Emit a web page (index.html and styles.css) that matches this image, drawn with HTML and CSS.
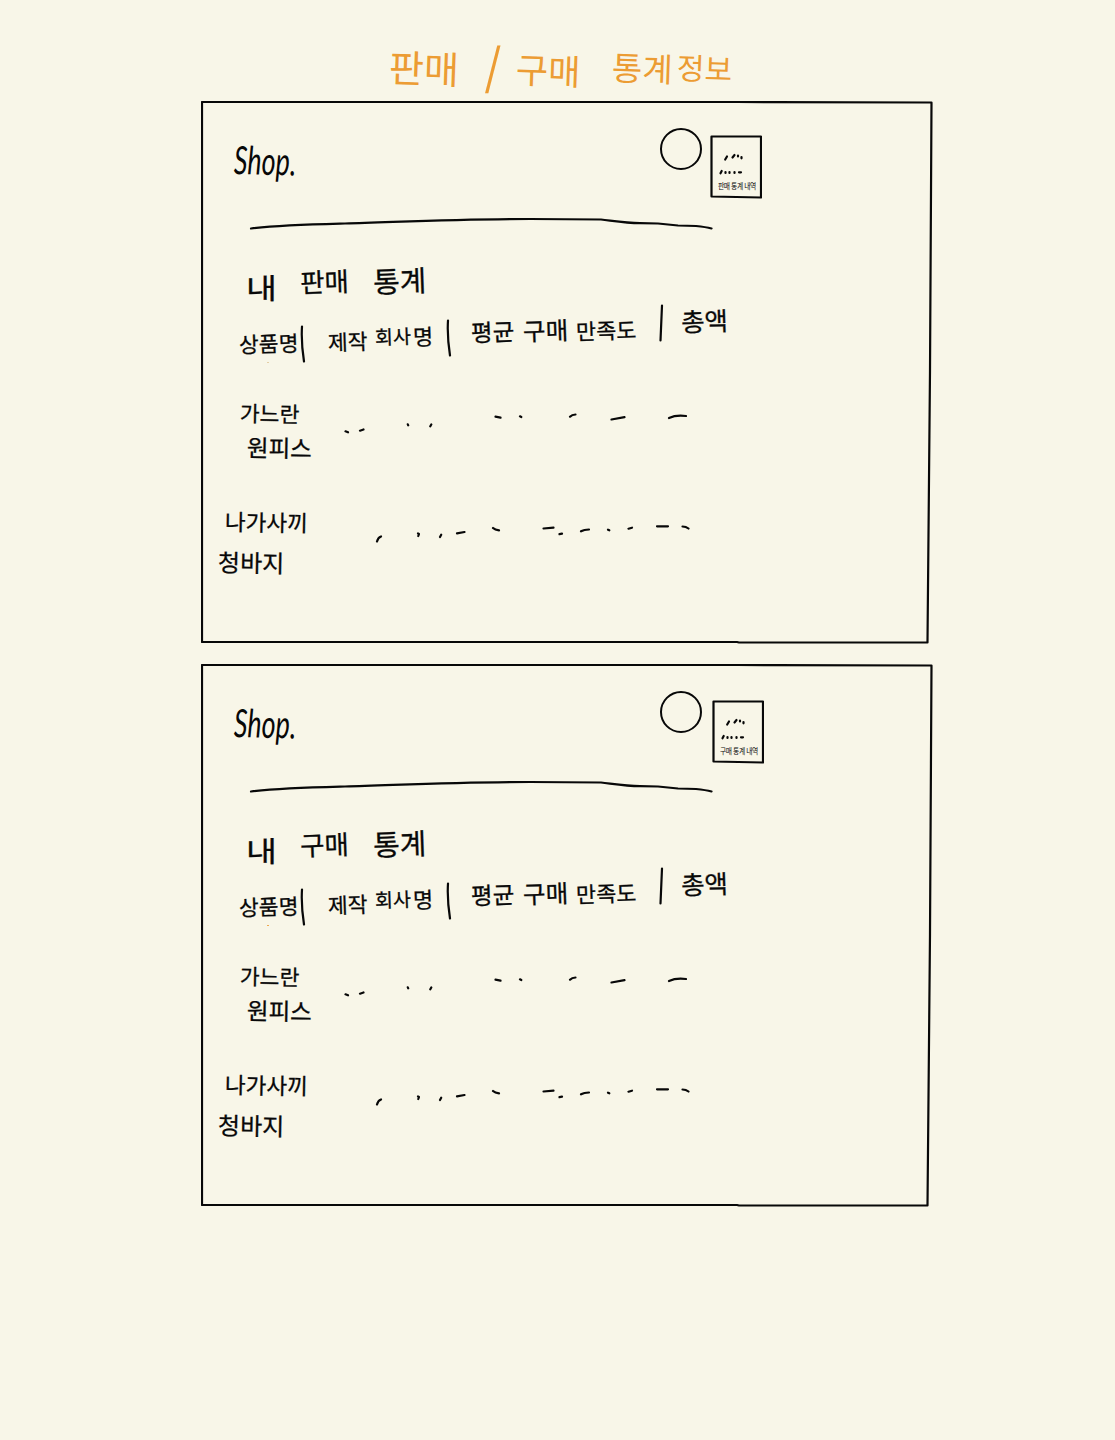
FILE: index.html
```html
<!DOCTYPE html>
<html lang="ko">
<head>
<meta charset="utf-8">
<title>판매 / 구매 통계정보</title>
<link rel="stylesheet" href="styles.css">
</head>
<body>
<svg class="defs" width="0" height="0" aria-hidden="true">
  <symbol id="frame" viewBox="0 0 732 544"><path d="M1 1 L536 1 L730.5 1.5 L729 270 L726.500 541.500 L538 541.500 L536 541 L1 541 Z"/></symbol>
  <symbol id="rule" viewBox="249 215 465 16"><path d="M251 228.500 C280 225 305 224.500 345 223.500 C400 222 455 219 530 219 L601 219.500 C614 221 626 223 640 223.200 L658 223.500 L678 225.500 L696 226 Q706 227 711.500 228.500"/></symbol>
  <symbol id="card" viewBox="0 0 52 64"><path d="M1.500 1.500 H51 V62.500 L1.500 61.500 Z"/><path class="dots" d="M17 21.500 L15.200 24.500 M24.500 20 L22.500 22.500 M28 20.500 V21.500 M31.500 22 V23.300 M11.700 36 L10.500 38.300 M15.500 37 V38 M19.500 37 V38 M24.500 37 V38 M29 37.300 H31"/></symbol>
  <symbol id="marks-a" viewBox="340 390 360 90"><path d="M345.500 431.300 L348 432.300 M360 430.700 L363.500 429.500 M407.800 424.300 L408.200 425.300 M431.300 424.500 L430.300 426.300 M495.500 416.700 L500.500 417.700 M520 416.300 L521.300 417 M570 416.700 Q572 414.500 575.500 414.500 M611.500 419.500 L624.500 417.200 M669 418 Q676 414.700 686 416"/></symbol>
  <symbol id="marks-b" viewBox="340 480 360 90"><path d="M377 541.500 Q378 537.500 381 536.500 M418 533.500 L419 534 L418.300 536 M441.200 534.700 L440 537 M457 533.300 L464.500 532 M493 528 Q495 530 499 530.300 M543.500 528.500 L553.500 527.700 M559.500 534.200 L562 533.700 M581 531.300 Q584 529.700 589 529.500 M608 529.700 L609.300 530.300 M628.500 528.700 L632 527.700 M657 526.300 H668 M682.500 526.500 Q686 526.500 688.500 528.500"/></symbol>
  <symbol id="bar" viewBox="0 0 6 38"><path d="M2 1.500 Q1 17 4 36.500"/></symbol>
  <symbol id="bar-l" viewBox="0 0 6 38"><path d="M4 1.500 L2.500 36.500"/></symbol>
</svg>

<h1 class="title"><span class="t-sell">판매</span><span class="t-slash">/</span><span class="t-buy">구매</span><span class="t-stat">통계</span><span class="t-info">정보</span></h1>

<main class="boards">
  <section class="panel">
    <svg class="frame"><use href="#frame"/></svg>
    <header class="top">
      <div class="logo">Shop.</div>
      <span class="avatar"></span>
      <div class="menu"><svg><use href="#card"/></svg><p>판매 통계 내역</p></div>
    </header>
    <svg class="rule"><use href="#rule"/></svg>
    <h2 class="heading"><span class="h-my">내</span><span class="h-kind">판매</span><span class="h-stat">통계</span></h2>
    <div class="columns">
      <span class="c-name">상품명</span><svg class="bar one"><use href="#bar"/></svg>
      <span class="c-make">제작</span><span class="c-firm">회사</span><span class="c-label">명</span><svg class="bar two"><use href="#bar"/></svg>
      <span class="c-avg">평균</span><span class="c-buy">구매</span><span class="c-sat">만족도</span><svg class="bar three"><use href="#bar-l"/></svg>
      <span class="c-total">총액</span>
      <i class="speck"></i>
    </div>
    <div class="item first"><div class="name"><span>가느란</span><span>원피스</span></div><svg class="marks"><use href="#marks-a"/></svg></div>
    <div class="item second"><div class="name"><span>나가사끼</span><span>청바지</span></div><svg class="marks"><use href="#marks-b"/></svg></div>
  </section>

  <section class="panel purchase">
    <svg class="frame"><use href="#frame"/></svg>
    <header class="top">
      <div class="logo">Shop.</div>
      <span class="avatar"></span>
      <div class="menu"><svg><use href="#card"/></svg><p>구매 통계 내역</p></div>
    </header>
    <svg class="rule"><use href="#rule"/></svg>
    <h2 class="heading"><span class="h-my">내</span><span class="h-kind">구매</span><span class="h-stat">통계</span></h2>
    <div class="columns">
      <span class="c-name">상품명</span><svg class="bar one"><use href="#bar"/></svg>
      <span class="c-make">제작</span><span class="c-firm">회사</span><span class="c-label">명</span><svg class="bar two"><use href="#bar"/></svg>
      <span class="c-avg">평균</span><span class="c-buy">구매</span><span class="c-sat">만족도</span><svg class="bar three"><use href="#bar-l"/></svg>
      <span class="c-total">총액</span>
      <i class="speck"></i>
    </div>
    <div class="item first"><div class="name"><span>가느란</span><span>원피스</span></div><svg class="marks"><use href="#marks-a"/></svg></div>
    <div class="item second"><div class="name"><span>나가사끼</span><span>청바지</span></div><svg class="marks"><use href="#marks-b"/></svg></div>
  </section>
</main>
</body>
</html>
```
FILE: styles.css
```css
* { box-sizing: border-box; }
body {
  margin: 0;
  min-height: 1440px;
  background: #f8f6e8;
  color: #080808;
  font-family: "Noto Sans CJK KR", sans-serif;
  line-height: 1;
}
svg {
  display: block;
  flex: none;
  fill: none;
  stroke: #080808;
  stroke-width: 2.2;
  stroke-linecap: round;
  stroke-linejoin: round;
}
.defs { position: absolute; }
h1, h2, p { margin: 0; font-weight: 400; }
span { white-space: nowrap; flex: none; }

.title {
  display: flex;
  align-items: flex-start;
  height: 101px;
  padding-left: 389px;
  color: #ec9c33;
}
.title span { transform: rotate(2deg); }
.title .t-sell { width: 71px; margin-top: 48px; font-size: 38px; }
.title .t-slash { width: 20px; margin: 42px 0 0 23px; font-size: 49px; transform: skewX(3deg); }
.title .t-buy { width: 66px; margin: 51px 0 0 13px; font-size: 35px; }
.title .t-stat { width: 60px; margin: 51px 0 0 30px; font-size: 33px; }
.title .t-info { width: 56px; margin: 52px 0 0 5px; font-size: 30px; }

.boards { display: flex; flex-direction: column; gap: 21px; padding-left: 201px; }
.panel { position: relative; width: 732px; height: 542px; }
.frame { position: absolute; inset: 0; width: 732px; height: 544px; }

.top { display: flex; align-items: flex-start; height: 114px; }
.logo {
  width: 62px;
  margin: 39px 0 0 33px;
  font: italic 400 39px/1 Lato, sans-serif;
  transform: scaleX(.69) rotate(1deg);
  transform-origin: left center;
}
.avatar {
  width: 42px;
  height: 42px;
  margin: 27px 0 0 364px;
  border: 2px solid #080808;
  border-radius: 50%;
}
.menu { position: relative; width: 52px; height: 64px; margin: 34px 0 0 8px; }
.menu svg { width: 52px; height: 64px; }
.menu .dots { stroke-width: 2.1; }
.menu p {
  position: absolute;
  left: 8px;
  top: 47px;
  font-size: 7.5px;
  letter-spacing: -.45px;
  white-space: nowrap;
  transform: scaleX(.9);
  transform-origin: left;
}
.purchase .menu { margin: 36px 0 0 10px; }
.rule { width: 465px; height: 16px; margin-left: 48px; }

.heading { display: flex; align-items: flex-start; height: 69px; }
.heading span, .columns span, .name span { transform: rotate(-2deg); -webkit-text-stroke: .3px #080808; }
.heading .h-my { width: 32px; margin: 42px 0 0 45px; font-size: 28px; transform: scaleX(1.2); transform-origin: left; }
.h-kind { width: 49px; margin: 37px 0 0 22px; font-size: 26.5px; }
.h-stat { width: 54px; margin: 34px 0 0 24px; font-size: 29px; }

.columns { position: relative; display: flex; align-items: flex-start; height: 90px; }
.c-name { width: 60px; margin: 32px 0 0 38px; font-size: 21.5px; }
.c-make { width: 41px; margin: 30px 0 0 22px; font-size: 21.5px; }
.c-firm { width: 37px; margin: 26px 0 0 6px; font-size: 19.5px; }
.c-label { width: 23px; margin: 24px 0 0 1px; font-size: 22px; }
.c-avg { width: 44px; margin: 20px 0 0 19px; font-size: 23.5px; }
.c-buy { width: 47px; margin: 18px 0 0 8px; font-size: 24.5px; }
.c-sat { width: 61px; margin: 19px 0 0 6px; font-size: 21.8px; }
.c-total { width: 47px; margin: 7px 0 0 17px; font-size: 25.5px; }
.bar { width: 6px; height: 38px; }
.bar.one { margin: 25px 0 0 1px; }
.bar.two { margin: 19px 0 0 10px; }
.bar.three { margin: 4px 0 0 21px; }
.speck {
  position: absolute;
  left: 66px;
  top: 62px;
  width: 2px;
  height: 1px;
  background: #e4cfa6;
}
.purchase .speck { background: #eea94f; }

.item { display: flex; height: 90px; }
.name { display: flex; flex-direction: column; align-items: flex-start; width: 139px; }
.marks { width: 360px; height: 90px; }
.first .name span:first-child { margin: 12px 0 0 39px; font-size: 21.5px; }
.first .name span:last-child { margin: 12px 0 0 46px; font-size: 23.5px; }
.second .name span:first-child { margin: 30px 0 0 24px; font-size: 22.5px; }
.second .name span:last-child { margin: 17px 0 0 17px; font-size: 24px; }
.name span { transform: rotate(1deg); }
```
